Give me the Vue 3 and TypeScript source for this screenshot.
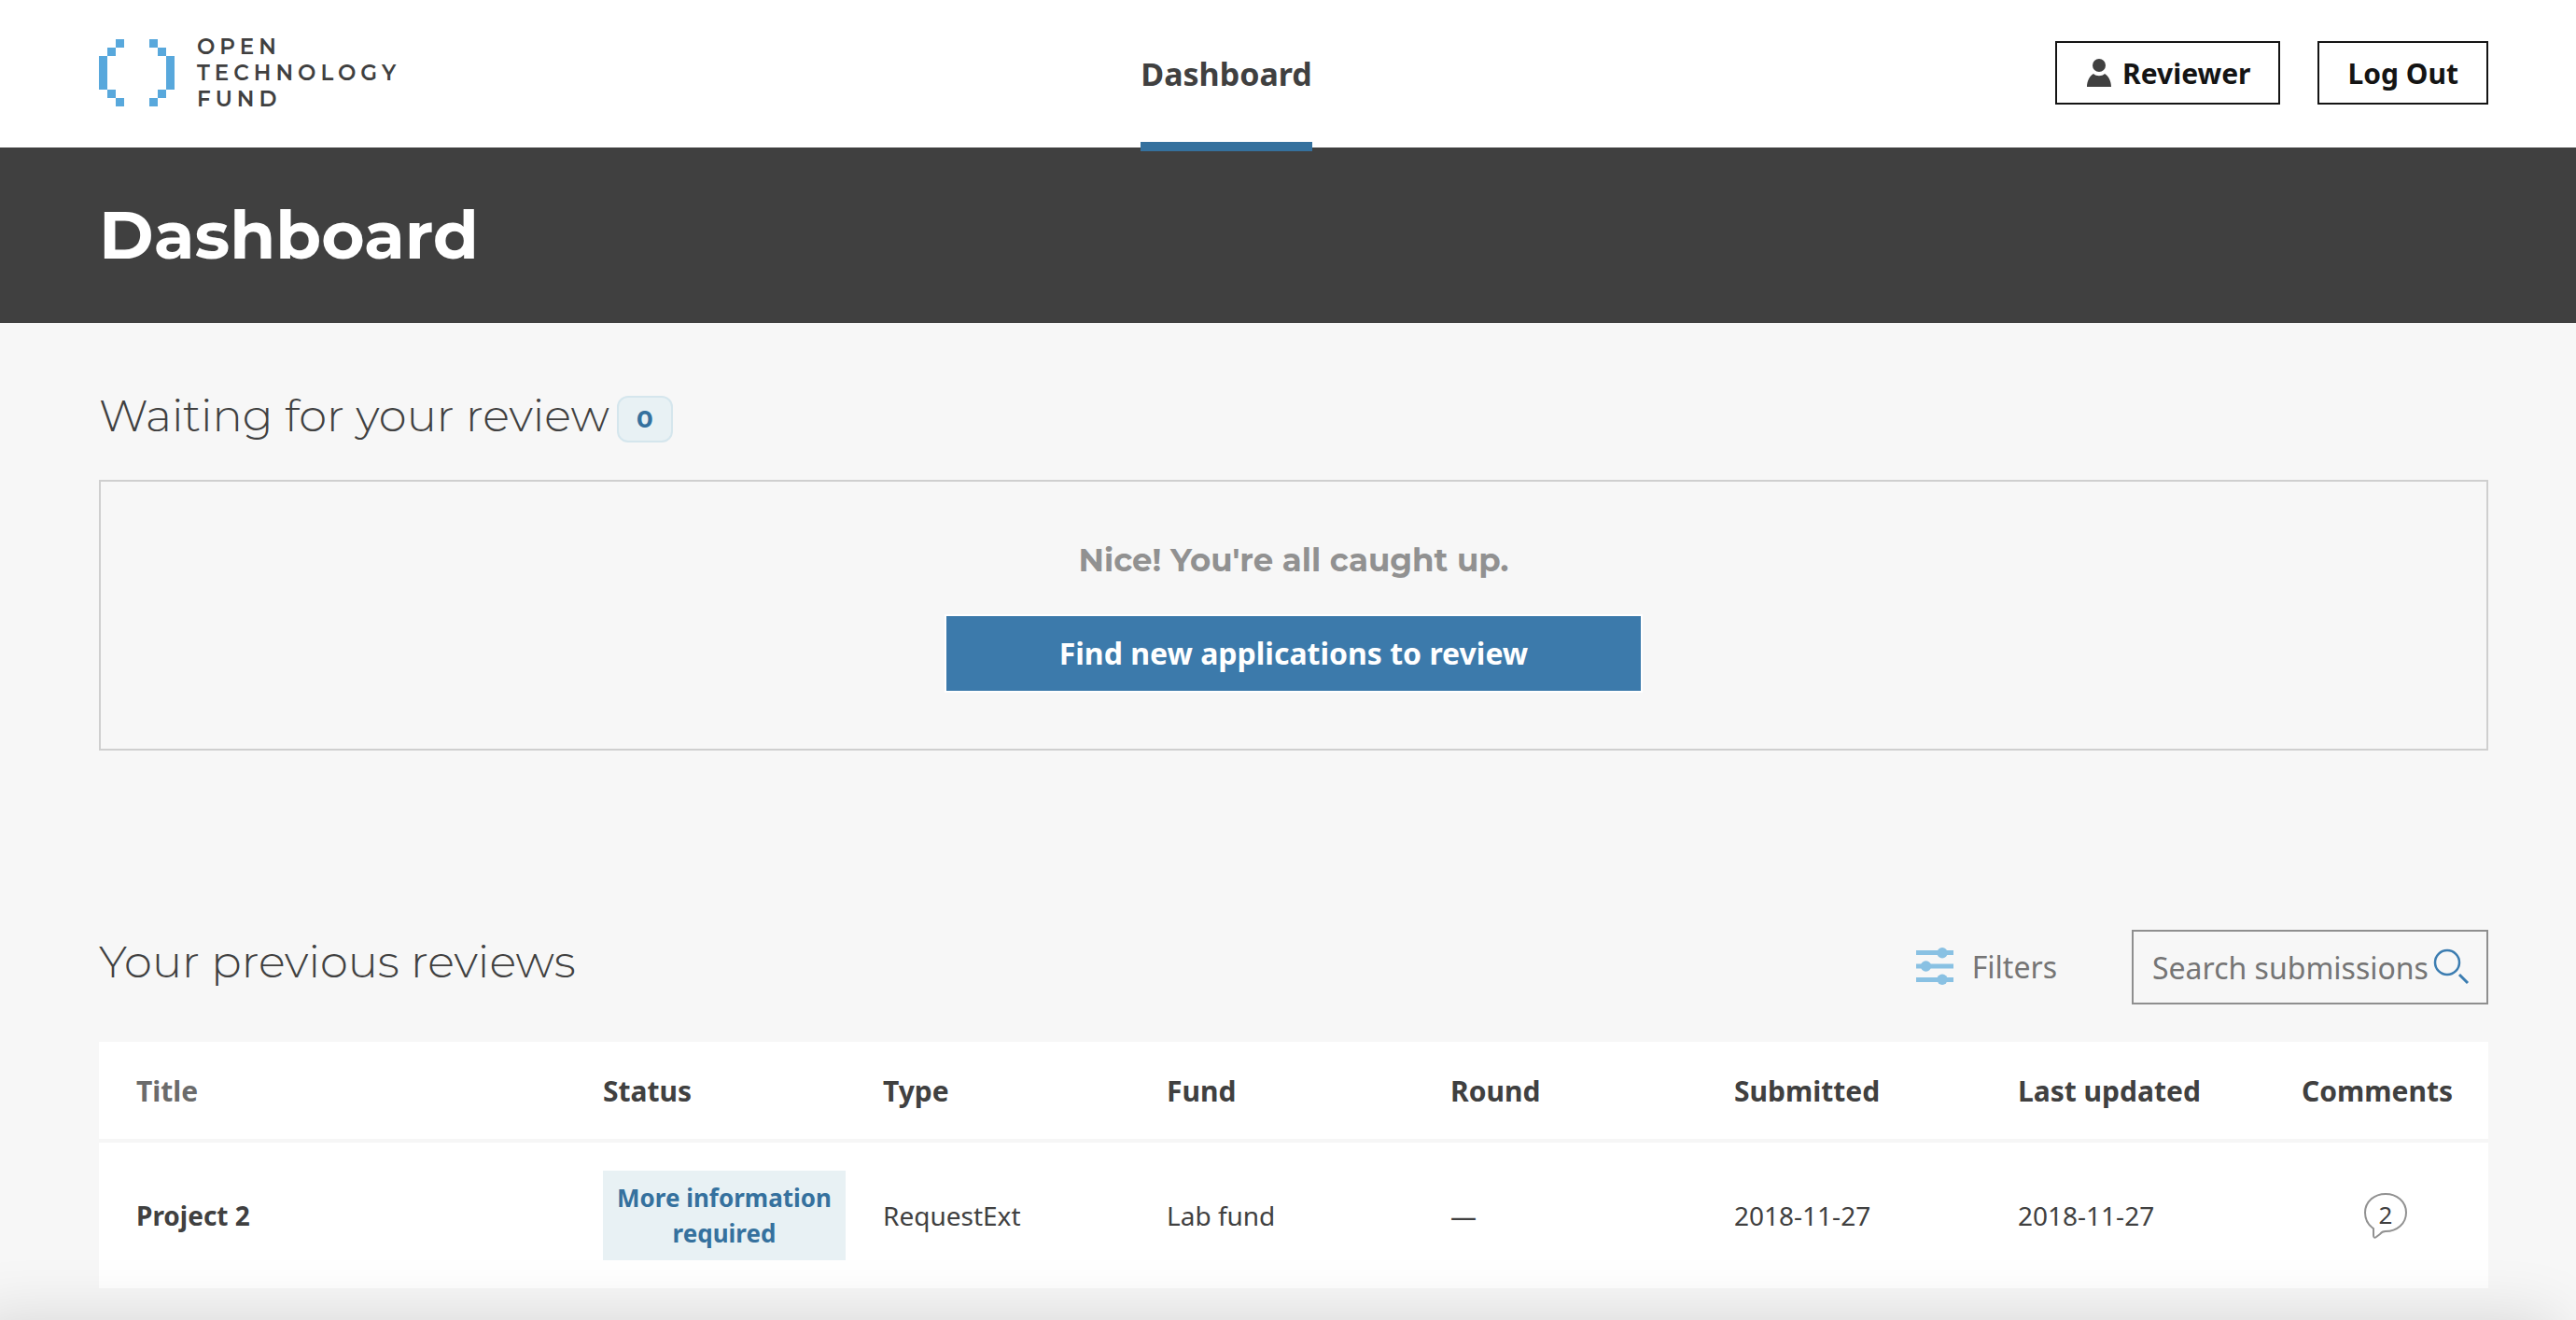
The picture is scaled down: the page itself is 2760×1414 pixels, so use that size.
<script setup lang="ts">
import { ref } from 'vue'

interface Submission {
  title: string
  status: string
  type: string
  fund: string
  round: string
  submitted: string
  updated: string
  comments: number
}

const search = ref('')
const waiting = ref(0)

const columns: string[] = ['Title', 'Status', 'Type', 'Fund', 'Round', 'Submitted', 'Last updated', 'Comments']

const submissions: Submission[] = [
  {
    title: 'Project 2',
    status: 'More information required',
    type: 'RequestExt',
    fund: 'Lab fund',
    round: '—',
    submitted: '2018-11-27',
    updated: '2018-11-27',
    comments: 2,
  },
]
</script>

<template>
  <div class="page">
    <header class="header">
      <a class="logo" href="#" aria-label="Open Technology Fund">
        <svg class="logo-mark" viewBox="0 0 9 8" shape-rendering="crispEdges" aria-hidden="true">
          <path
            fill="#58a8dc"
            d="M2 0h1v1H2zM1 1h1v1H1zM0 2h1v4H0zM1 6h1v1H1zM2 7h1v1H2zM6 0h1v1H6zM7 1h1v1H7zM8 2h1v4H8zM7 6h1v1H7zM6 7h1v1H6z"
          />
        </svg>
        <span class="logo-text">
          <span>OPEN</span>
          <span>TECHNOLOGY</span>
          <span>FUND</span>
        </span>
      </a>
      <nav class="nav">
        <a class="nav-link" href="#">Dashboard</a>
      </nav>
      <div class="account">
        <a class="button" href="#">
          <svg class="person" viewBox="0 0 30 30" aria-hidden="true">
            <ellipse cx="15" cy="7" rx="7" ry="7" fill="#404040" />
            <path fill="#404040" d="M2 30C2 24 5 18 9 16C12 19 18 19 21 16C25 18 28 24 28 30Z" />
          </svg>
          Reviewer
        </a>
        <a class="button" href="#">Log Out</a>
      </div>
    </header>

    <div class="banner">
      <h1>Dashboard</h1>
    </div>

    <main class="content">
      <section class="waiting">
        <h2>Waiting for your review <span class="count">{{ waiting }}</span></h2>
        <div class="empty">
          <p>Nice! You're all caught up.</p>
          <a class="find" href="#">Find new applications to review</a>
        </div>
      </section>

      <section>
        <div class="toolbar">
          <h2>Your previous reviews</h2>
          <div class="tools">
            <button class="filters" type="button">
              <svg viewBox="0 0 40 40" aria-hidden="true">
                <g fill="#89c1e3">
                  <path d="M0 3h40v5H0zM0 17.5h40v5H0zM0 32h40v5H0z" />
                  <circle cx="28" cy="5.7" r="5.7" />
                  <circle cx="10.5" cy="20" r="5.7" />
                  <circle cx="28" cy="34.3" r="5.7" />
                </g>
              </svg>
              Filters
            </button>
            <form class="search" role="search" @submit.prevent>
              <input v-model="search" type="text" placeholder="Search submissions" aria-label="Search submissions" />
              <button type="submit" aria-label="Search">
                <svg viewBox="0 0 40 40" fill="none" stroke="#3c7db1" aria-hidden="true">
                  <circle cx="16" cy="15" r="13" stroke-width="2.5" />
                  <path d="M29 28l9 9" stroke-width="3" />
                </svg>
              </button>
            </form>
          </div>
        </div>

        <table>
          <colgroup>
            <col />
            <col class="col-status" />
            <col class="col-data" span="5" />
            <col class="col-comments" />
          </colgroup>
          <thead>
            <tr>
              <th v-for="name in columns" :key="name" scope="col">{{ name }}</th>
            </tr>
          </thead>
          <tbody>
            <tr v-for="item in submissions" :key="item.title">
              <td><a class="title" href="#">{{ item.title }}</a></td>
              <td><span class="status">{{ item.status }}</span></td>
              <td>{{ item.type }}</td>
              <td>{{ item.fund }}</td>
              <td>{{ item.round }}</td>
              <td>{{ item.submitted }}</td>
              <td>{{ item.updated }}</td>
              <td>
                <span class="bubble">
                  <svg viewBox="0 0 48 50" fill="none" stroke="#919191" stroke-width="2" stroke-linejoin="round" aria-hidden="true">
                    <path
                      d="M11 39C5 35 2 29 2 22C2 10 12 2 24 2S46 10 46 22S36 42 24 42C22 42 20 42 18 45L14 48Q11 50 11 46Z"
                    />
                  </svg>
                  <span class="bubble-count">{{ item.comments }}</span>
                </span>
              </td>
            </tr>
          </tbody>
        </table>
      </section>
    </main>
    <div class="fade"></div>
  </div>
</template>

<style>
body {
  margin: 0;
}
</style>

<style scoped>
.page {
  position: relative;
  overflow: hidden;
  min-height: 100vh;
  background: #f7f7f7;
  color: #404040;
  font-family: 'Noto Sans', sans-serif;
}

.page * {
  box-sizing: border-box;
}

a {
  color: inherit;
  text-decoration: none;
}

h1,
h2,
p {
  margin: 0;
}

.header {
  display: flex;
  justify-content: space-between;
  align-items: flex-start;
  height: 158px;
  padding: 42px 94px 0 106px;
  background: #fff;
}

.logo {
  display: flex;
  width: 320px;
}

.logo-mark {
  flex-shrink: 0;
  width: 81px;
  height: 72px;
}

.logo-text {
  display: flex;
  flex-direction: column;
  margin: -6px 0 0 24px;
  font: 600 23px/28px Montserrat, Inter, sans-serif;
  letter-spacing: 5px;
}

.nav-link {
  display: block;
  position: relative;
  height: 120px;
  font-size: 34px;
  font-weight: 700;
  line-height: 74px;
}

.nav-link::after {
  content: '';
  position: absolute;
  right: 0;
  bottom: 0;
  left: 0;
  height: 10px;
  background: #35719e;
}

.account {
  display: flex;
  gap: 40px;
  padding-top: 2px;
}

.button {
  display: flex;
  align-items: center;
  gap: 10px;
  height: 68px;
  padding: 0 30px;
  border: 2px solid #141414;
  color: #141414;
  font-size: 30px;
  font-weight: 700;
}

.person {
  width: 30px;
  height: 30px;
}

.banner {
  display: flex;
  align-items: center;
  height: 188px;
  padding: 0 106px;
  background: #404040;
  color: #fff;
}

h1 {
  font: 700 71px/88px Montserrat, Inter, sans-serif;
}

.content {
  padding: 70px 94px 32px 106px;
}

h2 {
  display: flex;
  align-items: center;
  gap: 8px;
  font: 300 48px/58px Montserrat, Inter, sans-serif;
}

.waiting {
  margin-bottom: 192px;
}

.count {
  width: 60px;
  height: 50px;
  margin-top: 8px;
  border: 2px solid #d5e6ed;
  border-radius: 12px;
  background: #e8f1f4;
  color: #35719e;
  font-size: 26px;
  font-weight: 700;
  line-height: 46px;
  text-align: center;
}

.empty {
  display: flex;
  flex-direction: column;
  align-items: center;
  margin-top: 40px;
  padding: 60px 20px;
  border: 2px solid #cfcfcf;
}

.empty p {
  margin-bottom: 34px;
  color: #919191;
  font: 700 34px/48px Montserrat, Inter, sans-serif;
}

.find {
  width: 748px;
  border: 2px solid #fff;
  background: #3c7aab;
  color: #fff;
  font-size: 32px;
  font-weight: 700;
  line-height: 80px;
  text-align: center;
}

.toolbar {
  display: flex;
  justify-content: space-between;
  margin-bottom: 40px;
}

.toolbar h2 {
  height: 68px;
}

.tools {
  display: flex;
  gap: 80px;
}

.filters {
  display: flex;
  align-items: center;
  gap: 20px;
  height: 78px;
  padding: 0;
  border: 0;
  background: none;
  color: #757575;
  font: 32px 'Noto Sans', sans-serif;
}

.filters svg {
  width: 40px;
  height: 40px;
}

.search {
  display: flex;
  align-items: center;
  width: 382px;
  height: 80px;
  padding: 0 18px 0 20px;
  border: 2px solid #8f8f8f;
}

.search input {
  flex: 1;
  min-width: 0;
  padding: 0;
  border: 0;
  outline: 0;
  background: none;
  color: #404040;
  font: 32px 'Noto Sans', sans-serif;
}

.search input::placeholder {
  color: #757575;
  opacity: 1;
}

.search button {
  display: flex;
  padding: 0;
  border: 0;
  background: none;
}

.search svg {
  width: 40px;
  height: 40px;
}

table {
  width: 100%;
  border-collapse: separate;
  border-spacing: 0;
  table-layout: fixed;
  background: #fff;
}

.col-status {
  width: 300px;
}

.col-data {
  width: 304px;
}

.col-comments {
  width: 200px;
}

th,
td {
  padding: 0;
  text-align: left;
  vertical-align: middle;
}

th {
  height: 104px;
  font-size: 30px;
  font-weight: 700;
}

th:first-child {
  color: #6b6b6b;
}

th:first-child,
td:first-child {
  padding-left: 40px;
}

td {
  height: 160px;
  border-top: 4px solid #f6f6f6;
  font-size: 28px;
}

td:last-child {
  padding-right: 20px;
}

.title {
  font-weight: 700;
}

.status {
  display: block;
  width: 260px;
  padding: 10px;
  background: #e8f1f4;
  color: #35719e;
  font-size: 26px;
  font-weight: 700;
  line-height: 38px;
  text-align: center;
}

.bubble {
  display: block;
  position: relative;
  width: 48px;
  height: 50px;
  margin: 0 auto;
}

.bubble svg {
  display: block;
  width: 48px;
  height: 50px;
}

.bubble-count {
  position: absolute;
  top: 0;
  right: 0;
  left: 0;
  font-size: 26px;
  line-height: 48px;
  text-align: center;
}

.fade {
  position: absolute;
  top: 100%;
  right: 20px;
  left: -30px;
  height: 200px;
  box-shadow: 0 0 70px rgba(0, 0, 0, 0.14);
}
</style>
